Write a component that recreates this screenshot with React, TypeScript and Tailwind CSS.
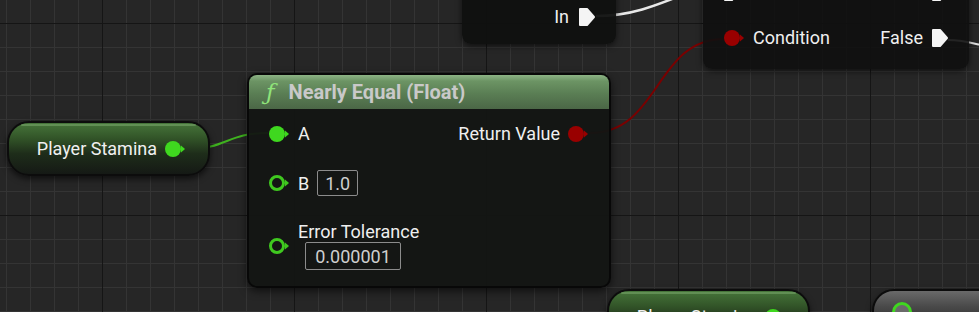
import React from 'react';

const font = { fontFamily: 'Roboto, "Liberation Sans", sans-serif' };

const DataPin = ({ color, hollow = false }: { color: string; hollow?: boolean }) => (
    <svg width="22" height="18" viewBox="0 0 22 18" className="shrink-0">
        {hollow ? (
            <circle cx="9" cy="9" r="6.5" fill="#141614" stroke={color} strokeWidth="3" />
        ) : (
            <circle cx="9" cy="9" r="8" fill={color} />
        )}
        <path d="M17 5.5 L21 9 L17 12.5 Z" fill={color} />
    </svg>
);

const ExecPin = () => (
    <svg width="18" height="20" viewBox="0 0 18 20" className="shrink-0">
        <path d="M2 2 H9 L16 10 L9 18 H2 Z" fill="#f4f4f4" stroke="#f4f4f4" strokeWidth="2" strokeLinejoin="round" />
    </svg>
);

const ValueBox = ({ children, className }: { children: React.ReactNode; className: string }) => (
    <div className={`border border-[#8c8c8c] rounded-[2px] text-[#cfcfcf] flex items-center justify-center ${className}`}>
        {children}
    </div>
);

const VariableNode = ({ label, className }: { label: string; className: string }) => (
    <div className={`absolute w-[203px] h-[55px] rounded-[22px] border-2 border-[#0c0c0c] shadow-[0_3px_6px_rgba(0,0,0,0.6)] bg-[linear-gradient(to_bottom,#46753a_0%,#325428_30%,#1e2d1a_60%,#151915_100%)] flex items-center justify-end pr-[22px] gap-[7px] ${className}`}>
        <div className="absolute inset-x-[12px] top-[1px] h-[2px] rounded-full bg-[#8fbf80]/40" />
        <span className="text-[18px] leading-[21px] text-[#f0f0f0]">{label}</span>
        <DataPin color="#3fd81f" />
    </div>
);

export default function App() {
    return (
        <div
            style={font}
            className="relative w-[979px] h-[312px] overflow-hidden bg-[#262626] bg-[linear-gradient(to_right,#151515_1px,transparent_1px),linear-gradient(to_bottom,#151515_1px,transparent_1px),linear-gradient(to_right,#343434_1px,transparent_1px),linear-gradient(to_bottom,#343434_1px,transparent_1px)] bg-[size:192px_192px,192px_192px,24px_24px,24px_24px] bg-[position:102px_0,0_23px,6px_0,0_23px]"
        >
            {/* wires */}
            <svg className="absolute inset-0" width="979" height="312">
                <path d="M596 16 C 632 16, 655 6, 700 -12" stroke="#e8e8e8" strokeWidth="2.5" fill="none" />
                <path d="M948 40 C 962 40, 968 42, 985 46" stroke="#dcdcdc" strokeWidth="2" fill="none" />
                <path d="M590 133 C 660 133, 655 39, 724 39" stroke="#7a0000" strokeWidth="2" fill="none" />
                <path d="M186 149 C 228 149, 226 133, 268 133" stroke="#3fb21f" strokeWidth="2" fill="none" />
            </svg>

            {/* exec node top */}
            <div className="absolute left-[462px] top-[-40px] w-[154px] h-[84px] rounded-[9px] bg-[#0f100f]/95 shadow-[0_2px_6px_rgba(0,0,0,0.6)] flex items-end justify-end pr-[20px] pb-[17px] gap-[9px]">
                <span className="text-[18px] text-[#efefef] leading-[20px]">In</span>
                <ExecPin />
            </div>

            {/* branch node */}
            <div className="absolute left-[703px] top-[-40px] w-[266px] h-[109px] rounded-[9px] bg-[#0f100f]/90 shadow-[0_2px_6px_rgba(0,0,0,0.6)] flex flex-col pl-[20px] pr-[20px] pt-[22px]">
                <div className="flex justify-between">
                    <ExecPin />
                    <ExecPin />
                </div>
                <div className="flex items-center justify-between mt-[25px]">
                    <div className="flex items-center gap-[8px]">
                        <DataPin color="#990000" />
                        <span className="text-[18px] leading-[21px] text-[#efefef]">Condition</span>
                    </div>
                    <div className="flex items-center gap-[8px]">
                        <span className="text-[18px] leading-[21px] text-[#efefef]">False</span>
                        <ExecPin />
                    </div>
                </div>
            </div>

            {/* nearly equal node */}
            <div className="absolute left-[247px] top-[73px] w-[364px] h-[215px] rounded-[10px] border-2 border-[#080808] bg-[#131513]/95 shadow-[0_3px_8px_rgba(0,0,0,0.6)] overflow-hidden">
                <div className="h-[34px] bg-[linear-gradient(to_bottom,#8cb385_0%,#6c9464_18%,#5a7e54_55%,#4b6746_100%)] flex items-center pl-[17px] gap-[14px]">
                    <span className="text-[23px] italic text-[#8fe47a] leading-none" style={{ fontFamily: '"DejaVu Serif", serif' }}>ƒ</span>
                    <span className="text-[20px] font-bold text-[#c9c9c9] leading-none">Nearly Equal (Float)</span>
                </div>
                <div className="relative pl-[19px] pr-[20px]">
                    <div className="flex items-center justify-between mt-[14px]">
                        <div className="flex items-center gap-[8px]">
                            <DataPin color="#3fd81f" />
                            <span className="text-[18px] leading-[21px] text-[#efefef]">A</span>
                        </div>
                        <div className="flex items-center gap-[7px]">
                            <span className="text-[18px] leading-[21px] text-[#efefef]">Return Value</span>
                            <DataPin color="#990000" />
                        </div>
                    </div>
                    <div className="flex items-center gap-[8px] mt-[26px]">
                        <DataPin color="#3fc81f" hollow />
                        <span className="text-[18px] leading-[21px] text-[#efefef]">B</span>
                        <ValueBox className="w-[41px] h-[26px] text-[18px]">1.0</ValueBox>
                    </div>
                    <div className="flex items-center gap-[8px] mt-[25px]">
                        <DataPin color="#3fc81f" hollow />
                        <div className="flex flex-col">
                            <span className="text-[18px] text-[#efefef] leading-[21px]">Error Tolerance</span>
                            <ValueBox className="ml-[7px] w-[96px] h-[28px] text-[18px]">0.000001</ValueBox>
                        </div>
                    </div>
                </div>
            </div>

            {/* variable nodes */}
            <VariableNode label="Player Stamina" className="left-[7px] top-[121px]" />
            <VariableNode label="Player Stamina" className="left-[607px] top-[289px]" />

            {/* grey node bottom right */}
            <div className="absolute left-[872px] top-[289px] w-[140px] h-[55px] rounded-[22px] border-2 border-[#0c0c0c] bg-[linear-gradient(to_bottom,#6a6a6a_0%,#4a4a4a_30%,#2a2a2a_70%)] shadow-[0_3px_6px_rgba(0,0,0,0.6)]">
                <div className="absolute left-[18px] top-[11px] w-[20px] h-[20px] rounded-full border-[3px] border-[#3fd81f] bg-[#6a6a6a]" />
            </div>
        </div>
    );
}
